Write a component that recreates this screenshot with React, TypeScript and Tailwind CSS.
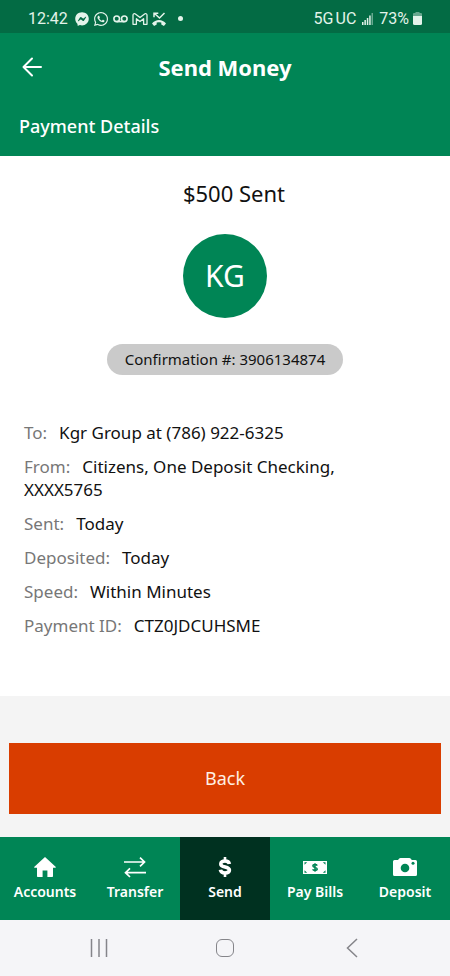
import type { ReactNode } from "react";
import { FaFacebookMessenger, FaWhatsapp } from "react-icons/fa";

interface Detail {
  label: string;
  value: string;
}

interface Tab {
  label: string;
  icon: ReactNode;
  active?: boolean;
}

const details: Detail[] = [
  { label: "To:", value: "Kgr Group at (786) 922-6325" },
  { label: "From:", value: "Citizens, One Deposit Checking, XXXX5765" },
  { label: "Sent:", value: "Today" },
  { label: "Deposited:", value: "Today" },
  { label: "Speed:", value: "Within Minutes" },
  { label: "Payment ID:", value: "CTZ0JDCUHSME" },
];

const HomeIcon = () => (
  <svg viewBox="0 0 22 20" className="h-5 w-[22px]" fill="currentColor" aria-hidden="true">
    <path d="M11 0 .4 9.8c-.4.5-.2 1 .4 1H3v8.2c0 .6.4 1 1 1h4.6v-6.6h4.8V20H18c.6 0 1-.4 1-1v-8.2h2.2c.6 0 .8-.5.4-1L11 0Z" />
  </svg>
);

const TransferIcon = () => (
  <svg viewBox="0 0 22 21" className="h-[21px] w-[22px]" fill="none" stroke="currentColor" strokeWidth="1.7" aria-hidden="true">
    <path d="M0 5h20.5M16 .7 20.5 5 16 9.3M22 15.7H1.5M6 11.4l-4.5 4.3L6 20" />
  </svg>
);

const DollarIcon = () => (
  <svg viewBox="0 0 14 20" className="h-5 w-3.5" fill="none" stroke="currentColor" strokeWidth="3.6" aria-hidden="true">
    <path d="M11.4 7C11 4.9 9.4 4 7 4 4.5 4 2.8 5 2.8 6.9c0 4.2 8.6 2 8.6 6.2 0 2-1.7 2.9-4.4 2.9-2.5 0-4.2-1-4.6-3.2" />
    <path strokeWidth="2.6" d="M7 0v4M7 16v4" />
  </svg>
);

const BillIcon = () => (
  <svg viewBox="0 0 24 13" className="h-[13px] w-6" aria-hidden="true">
    <path fill="currentColor" d="M0 0h24v13H0z" />
    <path fill="#008555" d="M1.5 1.3h2.7L1.5 3.8zM22.5 1.3h-2.7l2.7 2.5zM1.5 11.7h2.7L1.5 9.2zM22.5 11.7h-2.7l2.7-2.5z" />
    <path fill="none" stroke="#008555" strokeWidth="1.5" d="M14.2 4.6c-.4-.8-1.2-1-2.2-1-1.2 0-2.1.4-2.1 1.4 0 2 4.3 1 4.3 3 0 1-.9 1.4-2.2 1.4-1.1 0-2-.3-2.3-1.2M12 2.3v8.5" />
  </svg>
);

const CameraIcon = () => (
  <svg viewBox="0 0 24 18" className="h-[18px] w-6" aria-hidden="true">
    <path fill="currentColor" d="M1.5 2H5l1-1.3Q6.5 0 7.5 0h8.8q1 0 1.5.7L18.8 2h3.7Q24 2 24 3.5v13q0 1.5-1.5 1.5h-21Q0 18 0 16.5v-13Q0 2 1.5 2Z" />
    <circle cx="12" cy="10" r="4.3" fill="#008555" />
    <circle cx="20" cy="5.2" r="1.5" fill="#008555" />
  </svg>
);

const tabs: Tab[] = [
  { label: "Accounts", icon: <HomeIcon /> },
  { label: "Transfer", icon: <TransferIcon /> },
  { label: "Send", icon: <DollarIcon />, active: true },
  { label: "Pay Bills", icon: <BillIcon /> },
  { label: "Deposit", icon: <CameraIcon /> },
];

const StatusBar = () => (
  <div className="flex h-[33px] items-center justify-between bg-[#036b44] px-7 pt-1 font-[Roboto,sans-serif] text-base text-[#e3f3ea]">
    <div className="flex items-center gap-1">
      <span className="mr-[3px]">12:42</span>
      <FaFacebookMessenger className="h-3.5 w-3.5" />
      <FaWhatsapp className="h-4 w-4" />
      <svg viewBox="0 0 15 8" className="h-2 w-[15px]" fill="none" stroke="currentColor" strokeWidth="1.6">
        <circle cx="3.7" cy="3.8" r="2.8" />
        <circle cx="11.3" cy="3.8" r="2.8" />
        <path d="M3.7 6.6h7.6" />
      </svg>
      <svg viewBox="0 0 16 12" className="h-3 w-4" fill="none" stroke="currentColor" strokeWidth="1.3" strokeLinejoin="round">
        <path d="M1 2.2C1 .7 2.4.3 3.4 1L8 4.6 12.6 1C13.6.3 15 .7 15 2.2V11.3h-3.4V5.7L8 8.5 4.4 5.700v5.6H1Z" />
      </svg>
      <svg viewBox="0 0 14 14" className="h-3.5 w-3.5" fill="none" stroke="currentColor" strokeWidth="1.5">
        <path d="M12.5 1 7.500 6 2.500 1.500M2 5.300V1.200h4.300" />
        <path fill="currentColor" stroke="none" d="M0 11.500C3.500 6.800 10.500 6.800 14 11.500L11.900 13.900 9.300 12.500V10.600Q7 10 4.700 10.600V12.500L2.100 13.900Z" />
      </svg>
      <span className="ml-2 h-[5px] w-[5px] rounded-full bg-current" />
    </div>
    <div className="flex items-center gap-1.5">
      <span className="flex gap-0.5">
        <span>5G</span>
        <span>UC</span>
      </span>
      <svg viewBox="0 0 11 12" className="h-3 w-[11px]" fill="currentColor">
        <path d="M0 9h1.5v3H0zM2.4 7h1.5v5H2.4zM4.8 5h1.5v7H4.8zM7.2 2.5h1.5V12H7.2z" />
        <path opacity=".45" d="M9.5 0H11v12H9.5z" />
      </svg>
      <span>73%</span>
      <svg viewBox="0 0 9 13" className="-ml-0.5 h-[13px] w-[9px]" fill="currentColor">
        <path opacity=".45" d="M2.5 0h4v1H8q1 0 1 1v2H0V2q0-1 1-1h1.5z" />
        <path d="M0 4h9v7.5Q9 13 7.5 13h-6Q0 13 0 11.5z" />
      </svg>
    </div>
  </div>
);

const Header = () => (
  <header className="bg-[#008555] text-white">
    <div className="grid grid-cols-[1fr_auto_1fr] items-center px-[22px] pt-[18px]">
      <button type="button" aria-label="Go back" className="justify-self-start">
        <svg viewBox="0 0 20 20" className="h-5 w-5" fill="none" stroke="currentColor" strokeWidth="2" strokeLinecap="round" strokeLinejoin="round">
          <path d="M19 10H2M10 1.5 1.5 10l8.5 8.5" />
        </svg>
      </button>
      <h1 className="text-[22px] leading-8 font-bold">Send Money</h1>
    </div>
    <h2 className="px-[19px] pt-[30px] pb-[17px] text-lg leading-[26px] font-medium">Payment Details</h2>
  </header>
);

const TabBar = () => (
  <nav className="grid grid-cols-5 bg-[#008555] text-white">
    {tabs.map((tab) => (
      <a
        key={tab.label}
        href="#"
        aria-current={tab.active ? "page" : undefined}
        className={`flex flex-col items-center pt-[19px] pb-[18px] ${tab.active ? "bg-[#003120]" : ""}`}
      >
        <span className="flex h-[22px] items-center">{tab.icon}</span>
        <span className="mt-1 text-sm leading-5 font-semibold">{tab.label}</span>
      </a>
    ))}
  </nav>
);

const SystemNav = () => (
  <div className="grid h-14 grid-cols-[99px_1fr_99px] items-center bg-[#f5f5f8] px-[49px] text-[#85858a]">
    <button type="button" aria-label="Recent apps" className="flex justify-center">
      <svg viewBox="0 0 18 18" className="h-[18px] w-[18px]" fill="none" stroke="currentColor" strokeWidth="1.5">
        <path d="M1.5 0v18M9 0v18M16.5 0v18" />
      </svg>
    </button>
    <button type="button" aria-label="Home" className="flex justify-center">
      <span className="h-[18px] w-[18px] rounded-md border border-current" />
    </button>
    <button type="button" aria-label="Back" className="flex justify-center">
      <svg viewBox="0 0 12 20" className="h-5 w-3" fill="none" stroke="currentColor" strokeWidth="1.5">
        <path d="M11 1 1.5 10l9.5 9" />
      </svg>
    </button>
  </div>
);

export default function App() {
  return (
    <div className="flex min-h-screen flex-col bg-[#f4f4f4] font-['Noto_Sans',sans-serif]">
      <StatusBar />
      <Header />
      <main className="flex flex-1 flex-col">
        <section className="flex-1 bg-white px-6 pt-[21px] pb-14 text-[#111]">
          <p className="pl-[18px] text-center text-[22px] leading-8">$500 Sent</p>
          <div className="mx-auto mt-[25px] flex h-[84px] w-[84px] items-center justify-center rounded-full bg-[#008555] text-3xl text-white">
            KG
          </div>
          <p className="mx-auto mt-[26px] w-fit rounded-full bg-[#cacaca] px-[18px] py-1 text-[15px] leading-[23px]">
            Confirmation #: 3906134874
          </p>
          <dl className="mt-[46px] flex flex-col gap-[11px] text-[17px] leading-[23px]">
            {details.map(({ label, value }) => (
              <div key={label} className="pr-5">
                <dt className="mr-3 inline text-[#777]">{label}</dt>
                <dd className="inline">{value}</dd>
              </div>
            ))}
          </dl>
        </section>
        <div className="px-[9px] pt-[47px] pb-[23px]">
          <button type="button" className="h-[71px] w-full bg-[#d93d00] pb-0.5 text-lg text-[#fff0e4]">
            Back
          </button>
        </div>
      </main>
      <TabBar />
      <SystemNav />
    </div>
  );
}
